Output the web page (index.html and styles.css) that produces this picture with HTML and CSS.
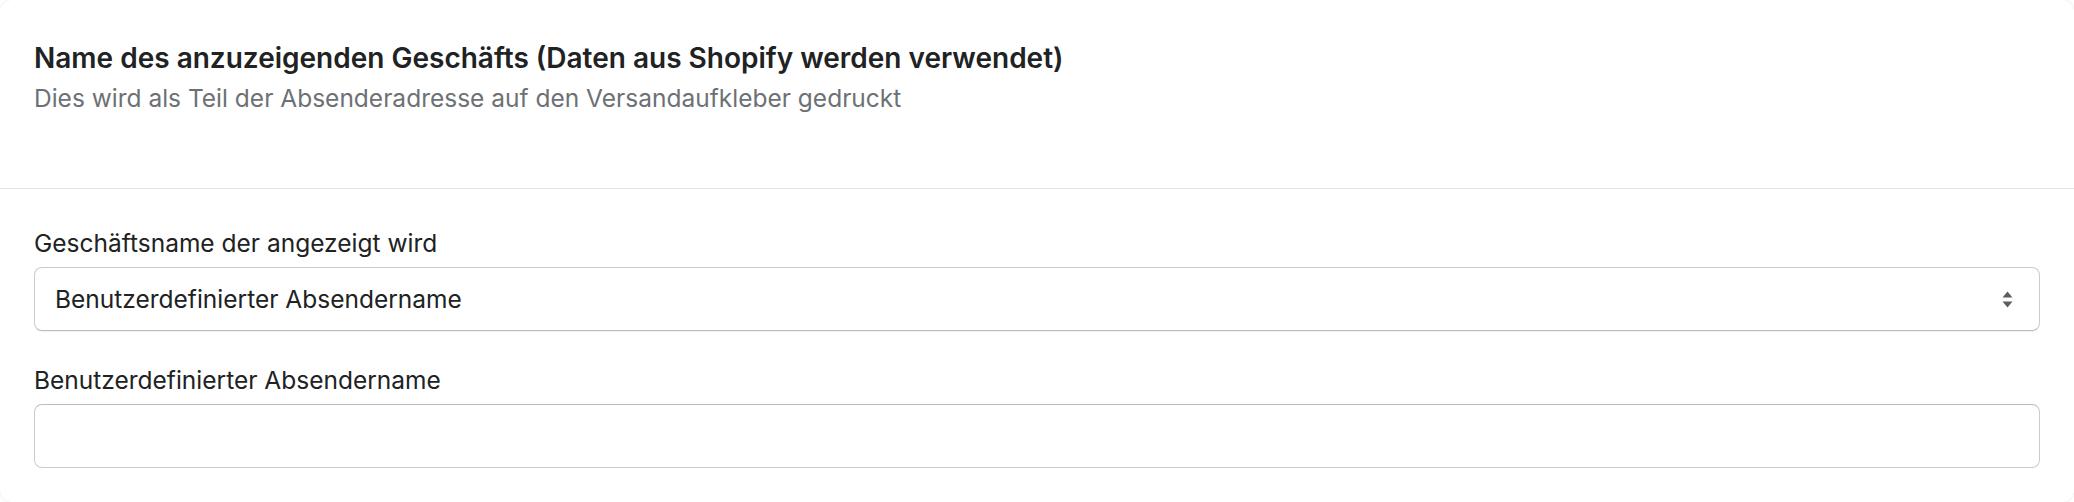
FILE: index.html
```html
<!DOCTYPE html>
<html lang="de">
<head>
<meta charset="utf-8">
<title>Geschäftsname</title>
<link rel="stylesheet" href="styles.css">
</head>
<body>
<div class="card">
  <div class="card-header">
    <h2 class="card-title">Name des anzuzeigenden Geschäfts (Daten aus Shopify werden verwendet)</h2>
    <p class="card-subtitle">Dies wird als Teil der Absenderadresse auf den Versandaufkleber gedruckt</p>
  </div>
  <div class="card-body">
    <div class="field">
      <label class="field-label">Geschäftsname der angezeigt wird</label>
      <div class="select">
        <span class="select-value">Benutzerdefinierter Absendername</span>
        <svg class="select-arrows" width="11" height="17" viewBox="0 0 11 17" aria-hidden="true">
          <path d="M5.5 0.5 L10.5 6.5 L0.5 6.5 Z" fill="#5c5f62"/>
          <path d="M0.5 10.5 L10.5 10.5 L5.5 16.5 Z" fill="#5c5f62"/>
        </svg>
      </div>
    </div>
    <div class="field field-second">
      <label class="field-label">Benutzerdefinierter Absendername</label>
      <input class="text-input" type="text" value="">
    </div>
  </div>
</div>
</body>
</html>
```

FILE: styles.css
```css
html, body {
  margin: 0;
  padding: 0;
  background: #ffffff;
}

body {
  font-family: Inter, "Noto Sans", "Liberation Sans", sans-serif;
  color: #202223;
}

.card {
  background: #ffffff;
  border-radius: 12px;
  box-shadow: 0 0 0 1px rgba(0, 0, 0, 0.03), 0 0 3px rgba(0, 0, 0, 0.05);
  min-height: 502px;
  box-sizing: border-box;
}

.card-header {
  padding: 40px 34px 73px 34px;
  border-bottom: 1px solid #e4e5e7;
}

.card-title {
  margin: 0;
  font-size: 28px;
  line-height: 36px;
  font-weight: 600;
  color: #202223;
}

.card-subtitle {
  margin: 5px 0 0 0;
  font-size: 24.5px;
  line-height: 34px;
  font-weight: 400;
  color: #6d7175;
}

.card-body {
  padding: 37px 34px 34px 34px;
}

.field {
  display: flex;
  flex-direction: column;
  gap: 7px;
}

.field-second {
  margin-top: 32px;
}

.field-label {
  font-size: 24.5px;
  line-height: 34px;
  color: #202223;
}

.select {
  display: flex;
  align-items: center;
  justify-content: space-between;
  height: 64px;
  box-sizing: border-box;
  padding: 0 26px 0 20px;
  border: 1px solid #c9cccf;
  border-bottom-color: #b9bdc1;
  border-radius: 8px;
  background: #ffffff;
  box-shadow: 0 1px 0 rgba(0, 0, 0, 0.05);
}

.select-value {
  font-size: 24.5px;
  line-height: 34px;
  color: #202223;
}

.select-arrows {
  display: block;
}

.text-input {
  display: block;
  width: 100%;
  height: 64px;
  box-sizing: border-box;
  margin: 0;
  padding: 0 20px;
  border: 1px solid #c9cccf;
  border-top-color: #b9bdc1;
  border-radius: 8px;
  background: #ffffff;
  font-family: inherit;
  font-size: 24.5px;
  color: #202223;
  outline: none;
}
```
